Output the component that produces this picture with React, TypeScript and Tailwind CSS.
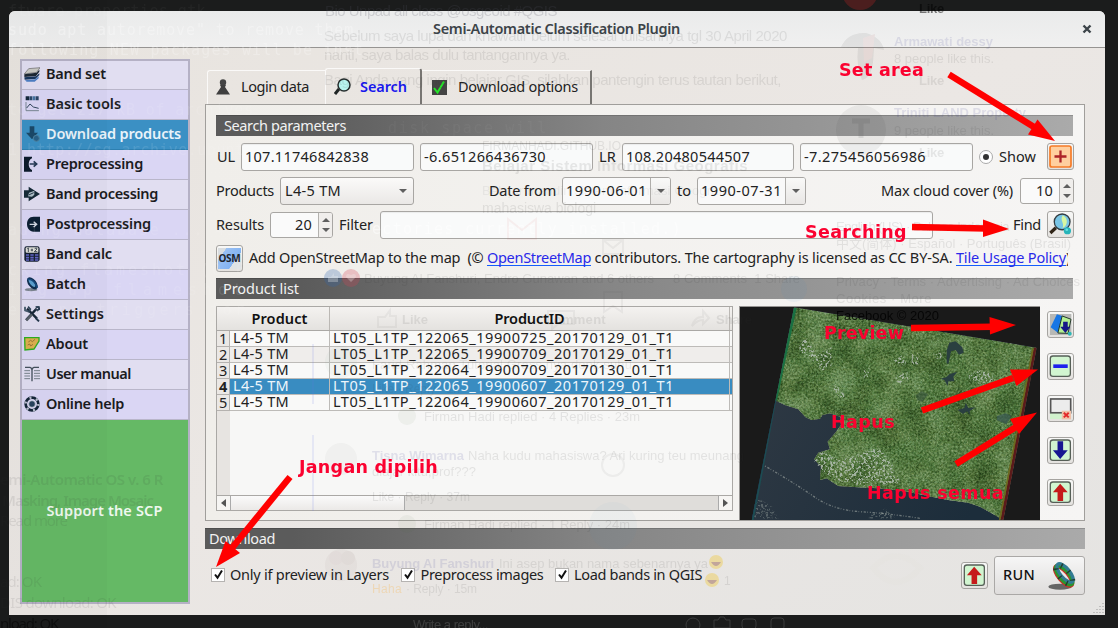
import React, { useLayoutEffect, useRef } from "react";

function Label({
  children,
  w,
  className = "",
  lift = "-mt-[2px]",
}: {
  children: string;
  w: number;
  className?: string;
  lift?: string;
}) {
  const ref = useRef<HTMLSpanElement>(null);
  useLayoutEffect(() => {
    const el = ref.current;
    if (!el) return;
    el.style.letterSpacing = "0px";
    const natural = el.getBoundingClientRect().width;
    el.style.letterSpacing = `${(w - natural) / children.length}px`;
  }, [children, w]);
  return (
    <span ref={ref} className={`inline-block shrink-0 whitespace-pre ${lift} ${className}`}>
      {children}
    </span>
  );
}

const menu: { name: string; w: number; icon: React.ReactNode }[] = [
  {
    name: "Band set",
    w: 60,
    icon: (
      <>
        <path d="M14 5L48 2L38 16L1 21Z" fill="#c9c9c4" stroke="#666" strokeWidth="2" />
        <path d="M1 22L38 17L46 8V14L36 27L1 30Z" fill="#1c2833" />
        <path d="M1 31L36 28L46 19V24L34 36L2 38Z" fill="#17365d" />
        <path d="M3 40L34 37L44 28V34L32 44H8Z" fill="#4d7fc4" />
      </>
    ),
  },
  {
    name: "Basic tools",
    w: 75,
    icon: (
      <>
        <path d="M5 1H15V13H5Z" fill="#16283d" />
        <path d="M16 1H25V13H16Z" fill="#2c4a6b" />
        <path d="M26 1H34V13H26Z" fill="#4673a3" />
        <path d="M35 1H44V13H35Z" fill="#2a4566" />
        <path d="M6 18V44H45" fill="none" stroke="#7b8794" strokeWidth="3" />
        <path d="M8 36L18 24L28 33L44 37" fill="none" stroke="#33475e" strokeWidth="3" />
      </>
    ),
  },
  {
    name: "Download products",
    w: 135,
    icon: (
      <>
        <path d="M17 1H31V20H42L24 40L6 20H17Z" fill="#1b4969" />
        <circle cx="37" cy="37" r="9" fill="#286188" stroke="#4e829f" strokeWidth="3" />
      </>
    ),
  },
  {
    name: "Preprocessing",
    w: 97,
    icon: (
      <>
        <path d="M0 2H24V7C12 10 10 37 24 42V47H0Z" fill="#0d1b2c" />
        <path d="M17 24H36M29 16L38 24L29 32" fill="none" stroke="#263a55" strokeWidth="5" />
      </>
    ),
  },
  {
    name: "Band processing",
    w: 112,
    icon: (
      <>
        <path d="M0 13H14V2L48 24L14 46V35H0Z" fill="#172b39" />
        <path d="M15 20L31 14V26L24 32L12 31Z" fill="#aebfc7" />
        <path d="M14 27L29 20" stroke="#263949" strokeWidth="3" />
      </>
    ),
  },
  {
    name: "Postprocessing",
    w: 105,
    icon: (
      <>
        <path d="M48 2H29C15 2 9 12 9 24S16 47 29 47H48Z" fill="#0d2033" />
        <path d="M17 25H36M29 17L38 25L29 33" fill="none" stroke="#d4d9e3" strokeWidth="4" />
      </>
    ),
  },
  {
    name: "Band calc",
    w: 66,
    icon: (
      <>
        <rect x="1" y="1" width="46" height="46" rx="7" fill="#162132" />
        <rect x="5" y="4" width="38" height="16" rx="3" fill="#dedfd8" />
        <path d="M10 8L13 6V18M20 12H27M24 8V16M32 8Q39 3 39 9L31 17H40" fill="none" stroke="#263341" strokeWidth="2.5" />
        <path d="M6 27H15M19 27H29M33 27H43M6 35H15M19 35H29M33 35H43M6 42H15M19 42H29M33 42H43" stroke="#6367c7" strokeWidth="5" />
      </>
    ),
  },
  {
    name: "Batch",
    w: 40,
    icon: (
      <>
        <ellipse cx="21" cy="41" rx="19" ry="5" fill="#7c8490" />
        <ellipse cx="25" cy="22" rx="12" ry="21" transform="rotate(-38 25 22)" fill="#102f50" />
        <ellipse cx="24" cy="21" rx="6" ry="14" transform="rotate(-38 24 21)" fill="#5ba0cf" />
        <path d="M11 10Q30 8 40 35" stroke="#174a7e" strokeWidth="5" fill="none" />
      </>
    ),
  },
  {
    name: "Settings",
    w: 58,
    icon: (
      <>
        <path d="M9 8L39 38M38 8L6 42" stroke="#172638" strokeWidth="7" />
        <path d="M3 2V13L14 17L19 9L12 2" fill="none" stroke="#31475a" strokeWidth="5" />
        <path d="M24 25L7 43" stroke="#59616a" strokeWidth="8" />
        <path d="M35 4L44 2L46 9L38 14M35 36L45 46" fill="none" stroke="#25394e" strokeWidth="6" />
      </>
    ),
  },
  {
    name: "About",
    w: 42,
    icon: (
      <>
        <path d="M2 5H45V15L30 39L3 42Z" fill="#ddb04f" stroke="#2eae20" strokeWidth="4" />
        <path d="M13 18L20 13L25 17L33 10M11 27L17 24L20 30L27 25" fill="none" stroke="#9a7638" strokeWidth="3" />
      </>
    ),
  },
  {
    name: "User manual",
    w: 85,
    icon: (
      <>
        <path d="M3 4H18Q24 5 24 13V46M45 4H30Q24 5 24 13" fill="none" stroke="#46525e" strokeWidth="4" />
        <path d="M1 14H18M1 22H18M1 30H18M1 38H18M30 14H48M30 22H48M30 30H48M30 38H48" stroke="#76818b" strokeWidth="3" />
      </>
    ),
  },
  {
    name: "Online help",
    w: 78,
    icon: (
      <>
        <circle cx="24" cy="24" r="19" fill="none" stroke="#142538" strokeWidth="8" />
        <circle cx="24" cy="24" r="19" fill="none" stroke="#b7bdcd" strokeWidth="7" strokeDasharray="6 13.9" />
        <circle cx="24" cy="24" r="10" fill="#28435d" stroke="#d6dbe1" strokeWidth="2" />
      </>
    ),
  },
];

const field =
  "flex h-7 shrink-0 items-center rounded-[3px] border border-[#a8a6a3] bg-[#f9fafa] pl-[3px] text-[#222] shadow-[inset_0_1px_1px_rgba(0,0,0,0.06)]";
const toolButton =
  "flex h-[27px] w-[27px] shrink-0 items-center justify-center rounded-[3px] border border-[#a5a3a0] bg-gradient-to-b from-[#f8f8f7] to-[#e4e2df]";
const sectionBar =
  "flex h-[21px] shrink-0 items-center border-t border-t-black/15 bg-gradient-to-r from-[#5b5b5b] from-10% via-[#858585] via-45% to-[#aaaaaa] text-[#f2f2f2]";

function Triangle({ up = false }: { up?: boolean }) {
  return (
    <svg className="h-1 w-2 shrink-0" viewBox="0 0 8 4">
      <path d={up ? "M0 4L4 0L8 4Z" : "M0 0H8L4 4Z"} fill="#5f5f5f" />
    </svg>
  );
}

function Spin({ value, className }: { value: string; className: string }) {
  return (
    <div className={`flex h-[26px] shrink-0 overflow-hidden rounded-[3px] border border-[#a8a6a3] bg-[#fafafa] ${className}`}>
      <div className="flex flex-1 items-center justify-end pr-[6px]">
        <Label w={17}>{value}</Label>
      </div>
      <div className="flex w-[14px] flex-col items-center justify-between border-l border-[#b3b1ae] bg-[#f0eeec] py-[5px]">
        <Triangle up />
        <Triangle />
      </div>
    </div>
  );
}

function DateBox({ value }: { value: string }) {
  return (
    <div className="flex h-7 w-[109px] shrink-0 overflow-hidden rounded-[3px] border border-[#a8a6a3] bg-[#f9f9f9]">
      <div className="flex flex-1 items-center pl-[3px]">
        <Label w={81}>{value}</Label>
      </div>
      <div className="flex w-[20px] items-center justify-center border-l border-[#b0aeab] bg-gradient-to-b from-[#f9f9f8] to-[#e9e7e5]">
        <Triangle />
      </div>
    </div>
  );
}

function Boxed({ children }: { children: React.ReactNode }) {
  return (
    <svg className="h-[23px] w-[23px]" viewBox="0 0 70 70">
      <rect x="4" y="3" width="61" height="62" rx="8" fill="#d1f5d0" stroke="#565f57" strokeWidth="4" />
      {children}
    </svg>
  );
}

const upArrow = <path d="M34 8L57 34H43V61H26V34H12Z" fill="#c51b1b" />;
const downArrow = <path d="M26 7H43V34H57L34 61L12 34H26Z" fill="#171791" />;

function Check({ text, w }: { text: string; w: number }) {
  return (
    <div className="flex items-center gap-[5px]">
      <span className="-mt-px flex h-[14px] w-[14px] items-center justify-center border border-[#b5b3b1] bg-white">
        <svg className="h-[11px] w-[11px]" viewBox="0 0 11 11">
          <path d="M2 5.5L4.5 8.7L9 1.5" fill="none" stroke="#111" strokeWidth="2" />
        </svg>
      </span>
      <Label w={w} lift="-mt-[3px]">{text}</Label>
    </div>
  );
}

function Satellite() {
  return (
    <svg className="block h-[213px] w-[300px] bg-[#1a1a1a]" viewBox="15 21 900 639" preserveAspectRatio="none">
      <defs>
        <filter id="grain" x="0" y="0" width="100%" height="100%" colorInterpolationFilters="sRGB">
          <feTurbulence type="fractalNoise" baseFrequency="0.16" numOctaves="3" seed="8" result="n" />
          <feColorMatrix
            in="n"
            type="matrix"
            values="1.0 0.15 0 0 -0.09  1.0 0 0 0 0  1.0 0 0.15 0 -0.09  0 0 0 0 1"
            result="c"
          />
          <feComposite in="c" in2="SourceGraphic" operator="in" result="d" />
          <feBlend in="d" in2="SourceGraphic" mode="soft-light" result="e" />
          <feTurbulence type="fractalNoise" baseFrequency="0.014" numOctaves="4" seed="4" result="m" />
          <feColorMatrix in="m" type="matrix" values="0.6 0.1 0 0 0.15  0.6 0 0 0 0.2  0.6 0 0 0 0.2  0 0 0 0 1" result="p" />
          <feComposite in="p" in2="SourceGraphic" operator="in" result="q" />
          <feBlend in="q" in2="e" mode="soft-light" />
        </filter>
        <filter id="clouds" x="0" y="0" width="100%" height="100%" colorInterpolationFilters="sRGB">
          <feTurbulence type="fractalNoise" baseFrequency="0.14" numOctaves="2" seed="21" />
          <feColorMatrix type="matrix" values="0 0 0 0 0.7  0 0 0 0 0.74  0 0 0 0 0.7  9 0 0 0 -4.7" result="m" />
          <feComposite in="m" in2="SourceGraphic" operator="in" />
        </filter>
        <linearGradient id="sea" x1="0" y1="0" x2="1" y2="0.4">
          <stop offset="0" stopColor="#323b45" />
          <stop offset="1" stopColor="#1c2d3b" />
        </linearGradient>
        <clipPath id="scene">
          <path d="M177 22L905 143L805 660H50Z" />
        </clipPath>
      </defs>
      <g clipPath="url(#scene)">
        <rect x="15" y="21" width="900" height="639" fill="url(#sea)" />
        <path
          d="M177 22L905 143L805 660L770 640L735 620L700 608L640 600L590 590L540 580L500 572L430 565L370 562L310 558L275 535L255 540L258 500L238 478L250 458L285 448L278 425L300 400L318 375L316 350L285 340L262 345L255 356L230 360L212 352L190 328L150 315L118 300Z"
          fill="#557840"
          filter="url(#grain)"
        />
        <g fill="#2a3f40">
          <path d="M643 128L662 124L682 142L686 158L672 164L662 150L648 154L640 192L635 190V152Z" />
          <path d="M617 236L634 232L644 222L667 215L655 230L658 244L640 244L638 258L628 240Z" />
          <path d="M668 330L688 324L692 308L700 324L722 322L704 333L706 345L696 334L684 342Z" />
          <path d="M785 348L812 340L830 347L814 373L786 361Z" fill="#365651" opacity=".7" />
          <path d="M542 286L560 273L580 282L562 306L548 301Z" fill="#36513c" opacity=".6" />
        </g>
        <g filter="url(#clouds)" fill="#fff" opacity=".85">
          <path d="M190 128L215 115L245 165L290 140L288 200L262 214L240 185L196 160Z" />
          <path d="M475 178L505 166L514 190L492 198ZM476 236L516 214L524 234L494 252Z" />
          <path d="M700 225L725 210L772 215L774 243L735 252L705 240Z" />
          <path d="M236 480L262 450L320 480L430 440L470 490L500 550L385 558L300 540L260 512Z" />
          <path d="M298 250L330 285L325 300L295 273ZM596 163L618 157L622 175L604 177Z" />
          <path d="M383 213L405 204L400 232L388 234ZM530 160H550V194H530Z" />
          <path d="M60 590L110 620L130 655L55 655ZM400 648L450 625L480 655H400Z" opacity=".4" />
        </g>
        <path
          d="M90 498Q180 550 237 590T375 635T555 655"
          fill="none"
          stroke="#aab0ac"
          strokeWidth="4"
          strokeDasharray="3 5 7 4 2 6"
          opacity=".55"
        />
        <path d="M177 22L118 300" stroke="#197042" strokeWidth="16" />
        <path d="M118 300L50 660" stroke="#1c4d52" strokeWidth="12" />
        <path d="M174 22L48 660" stroke="#173d75" strokeWidth="4" />
        <path d="M905 143L805 660" stroke="#5c1b1b" strokeWidth="17" />
        <path d="M894 145L794 660" stroke="#6d691f" strokeWidth="5" />
      </g>
    </svg>
  );
}

const products = [
  "LT05_L1TP_122065_19900725_20170129_01_T1",
  "LT05_L1TP_122065_19900709_20170129_01_T1",
  "LT05_L1TP_122064_19900709_20170130_01_T1",
  "LT05_L1TP_122065_19900607_20170129_01_T1",
  "LT05_L1TP_122064_19900607_20170129_01_T1",
];

function Ghost({ children, at, w, className = "" }: { children: string; at: [number, number]; w: number; className?: string }) {
  return (
    <div className="absolute leading-[20px]" style={{ left: at[0], top: at[1] - 10 }}>
      <Label w={w} lift="" className={className}>
        {children}
      </Label>
    </div>
  );
}

function BackgroundWindows() {
  return (
    <div className="pointer-events-none absolute inset-0 overflow-hidden font-['Liberation_Sans'] text-[15px] text-[#333]/10">
      <div className="absolute left-0 top-0 h-full w-[107px] bg-black/2" />
      <Ghost at={[325, 11]} w={232} className="text-[#556]/20">{"Bio Unpad all class @osgeoid #QGIS"}</Ghost>
      <Ghost at={[324, 36]} w={463}>Sebelum saya lupa dan khawatir belum selesai tulisannya tgl 30 April 2020</Ghost>
      <Ghost at={[324, 55]} w={246}>nanti, saya balas dulu tantangannya ya.</Ghost>
      <Ghost at={[324, 80]} w={457}>Bagi Anda yang ingin belajar GIS, silahkan pantengin terus tautan berikut,</Ghost>
      <Ghost at={[482, 145]} w={139} className="text-[12px]">FIRMANHADI.GITHUB.IO</Ghost>
      <Ghost at={[482, 166]} w={266} className="font-bold">Belajar Sistem Informasi Geografis</Ghost>
      <Ghost at={[482, 190]} w={250} className="text-[13px] text-[#333]/6">Belajar mandiri sistem informasi Geografis</Ghost>
      <Ghost at={[482, 208]} w={114} className="text-[14px]">mahasiswa biologi</Ghost>
      <Ghost at={[894, 41]} w={99} className="text-[13px] font-bold text-[#338]/12">Armawati dessy</Ghost>
      <Ghost at={[894, 58]} w={100} className="text-[13px]">8 people like this.</Ghost>
      <Ghost at={[919, 80]} w={25} className="text-[13px] font-bold">Like</Ghost>
      <Ghost at={[919, 8]} w={25} className="text-[13px] font-bold text-black/50">Like</Ghost>
      <Ghost at={[894, 112]} w={132} className="text-[13px] font-bold text-[#338]/12">Triniti LAND Property</Ghost>
      <Ghost at={[894, 130]} w={100} className="text-[13px]">9 people like this.</Ghost>
      <Ghost at={[919, 152]} w={25} className="text-[13px] font-bold">Like</Ghost>
      <Ghost at={[836, 226]} w={180} className="text-[13px]">English (US) · Bahasa Indonesia ·</Ghost>
      <div className="font-['Liberation_Sans','Noto_Sans_CJK_SC',sans-serif]">
        <Ghost at={[836, 243]} w={235} className="text-[13px]">中文(简体) · Español · Português (Brasil)</Ghost>
      </div>
      <Ghost at={[836, 281]} w={244} className="text-[13px]">Privacy · Terms · Advertising · Ad Choices</Ghost>
      <Ghost at={[836, 298]} w={96} className="text-[13px]">Cookies · More</Ghost>
      <Ghost at={[836, 315]} w={103} className="text-[13px] text-black/80">Facebook © 2020</Ghost>
      <Ghost at={[364, 278]} w={290} className="text-[13px]">Buyung Al Fanshuri, Endro Gunawan and 6 others</Ghost>
      <Ghost at={[673, 278]} w={127} className="text-[13px]">8 Comments  1 Share</Ghost>
      <Ghost at={[402, 319]} w={26} className="text-[13px] font-bold">Like</Ghost>
      <Ghost at={[544, 319]} w={62} className="text-[13px] font-bold">Comment</Ghost>
      <Ghost at={[716, 319]} w={36} className="text-[13px] font-bold">Share</Ghost>
      <Ghost at={[372, 364]} w={260} className="text-[13px] text-[#333]/8">Farid Rahman Tutorial Grass nya donk suhu</Ghost>
      <Ghost at={[372, 388]} w={88} className="text-[12px] text-[#333]/8">Like · Reply · 1h</Ghost>
      <Ghost at={[424, 416]} w={216} className="text-[13px]">Firman Hadi replied · 4 Replies · 23m</Ghost>
      <Ghost at={[372, 455]} w={92} className="text-[13px] font-bold text-[#338]/12">Tisna Wimarna</Ghost>
      <Ghost at={[468, 455]} w={276} className="text-[13px]">Naha kudu mahasiswa? Ari kuring teu meunang</Ghost>
      <Ghost at={[372, 471]} w={104} className="text-[13px]">diajar kitu,prof???</Ghost>
      <Ghost at={[372, 496]} w={98} className="text-[12px]">Like · Reply · 37m</Ghost>
      <Ghost at={[424, 524]} w={206} className="text-[13px]">Firman Hadi replied · 1 Reply · 24m</Ghost>
      <Ghost at={[372, 563]} w={122} className="text-[13px] font-bold text-[#338]/12">Buyung Al Fanshuri</Ghost>
      <Ghost at={[499, 563]} w={209} className="text-[13px]">Ini asep bukan nama sebenarnya ya</Ghost>
      <Ghost at={[372, 588]} w={30} className="text-[12px] text-amber-500/20">Haha</Ghost>
      <Ghost at={[406, 588]} w={71} className="text-[12px]">· Reply · 15m</Ghost>
      <Ghost at={[724, 580]} w={6} className="text-[12px]">1</Ghost>
      <Ghost at={[413, 624]} w={75} className="text-[13px] text-white/15">Write a reply...</Ghost>
      <div className="font-['Noto_Sans']">
        <Ghost at={[0, 479]} w={163} className="font-semibold">emi-Automatic OS v. 6 R</Ghost>
        <Ghost at={[2, 500]} w={151} className="font-semibold">Masking, Image Mosaic</Ghost>
        <Ghost at={[0, 520]} w={67}>Read more</Ghost>
        <Ghost at={[0, 581]} w={41}>ad: OK</Ghost>
        <Ghost at={[0, 602]} w={116}>DIS download: OK</Ghost>
        <Ghost at={[0, 623]} w={58} className="text-black/50">nload: OK</Ghost>
      </div>
      <div className="font-['DejaVu_Sans_Mono'] text-white/10">
        <Ghost at={[8, 11]} w={198} className="text-white/4">ftware-properties-gtk</Ghost>
        <Ghost at={[8, 30]} w={356} className="text-white/30">sudo apt autoremove" to remove them.</Ghost>
        <Ghost at={[8, 50]} w={356} className="text-white/25">following NEW packages will be inst</Ghost>
        <Ghost at={[8, 110]} w={246}>to get 217 kB of archives</Ghost>
        <Ghost at={[8, 150]} w={246}>1 http://sg.archive.ubuntu</Ghost>
        <Ghost at={[8, 230]} w={240}>ading database ... 492</Ghost>
        <Ghost at={[8, 270]} w={240}>cking flameshot (0.6</Ghost>
        <Ghost at={[8, 290]} w={240}>ing up flameshot</Ghost>
        <Ghost at={[8, 310]} w={240}>essing triggers for</Ghost>
        <Ghost at={[372, 229]} w={310} className="text-white/50">ectories currently installed.)</Ghost>
        <Ghost at={[388, 128]} w={160} className="text-white/4">disk space will</Ghost>
      </div>
      <svg className="absolute inset-0 h-full w-full" viewBox="0 0 1118 628">
        <circle cx="860" cy="-8" r="18" fill="#bc2525" opacity=".3" />
        <g opacity=".08" fill="#333">
          <path d="M841 47Q848 32 866 33Q882 38 884 50L874 48L873 62Q871 78 862 80Q856 66 858 48Z" />
          <path d="M863 38L875 34L872 58L864 62Z" fill="#a33" />
        </g>
        <circle cx="861" cy="130" r="25" fill="#222" opacity=".06" />
        <path d="M852 121H870M861 121V138" stroke="#333" strokeWidth="5" opacity=".1" />
        <circle cx="333" cy="278" r="9" fill="#3269b0" opacity=".28" />
        <circle cx="351" cy="278" r="9" fill="#d34455" opacity=".28" />
        <path d="M351 282L346 277Q346 272 351 275Q356 272 356 277ZM328 277H331L334 273V276H338V282H328Z" fill="#eee" opacity=".3" />
        <circle cx="613" cy="526" r="24" fill="#4b91cc" opacity=".04" />
        <circle cx="794" cy="289" r="13" fill="#3182c4" opacity=".06" />
        <g fill="none" stroke="#444" strokeWidth="2" opacity=".06">
          <path d="M378 317H385L390 310V316H396V327H378ZM548 311H574V324H558L552 329V324H548ZM692 326Q695 316 703 317V311L709 318L703 324V320Q697 320 692 326ZM604 292H622V312L613 306L604 312Z" />
          <path d="M508 219V239H536V219L522 230Z" stroke="#cf3d3d" />
          <path d="M603 240H623V254H603ZM603 240L613 248L623 240" />
          <circle cx="613" cy="465" r="11" />
          <path d="M873 568Q896 544 920 568Q896 596 873 568Z" stroke="#ded8c7" strokeWidth="6" />
        </g>
        <path d="M313 344V404M313 435V511" stroke="#6670e0" strokeWidth="2" opacity=".12" />
        <g opacity=".06">
          <circle cx="341" cy="362" r="16" fill="#89a49b" />
          <circle cx="341" cy="459" r="16" fill="#858b86" />
          <circle cx="341" cy="565" r="16" fill="#8b7777" />
          <circle cx="407" cy="416" r="9" fill="#56724e" />
          <circle cx="407" cy="524" r="9" fill="#56724e" />
          <circle cx="336" cy="558" r="7" fill="#634" />
          <circle cx="348" cy="558" r="7" fill="#422" />
        </g>
        <g opacity=".4">
          <circle cx="716" cy="562" r="7" fill="#f0c93d" />
          <circle cx="712" cy="580" r="7" fill="#f0c93d" />
          <path d="M711 562Q716 570 721 562ZM707 580Q712 588 717 580Z" fill="#8a4830" />
        </g>
        <g fill="none" stroke="#777" opacity=".35">
          <circle cx="693" cy="625" r="7" />
          <path d="M714 620H718L720 617H724L726 620H730V628H714Z" />
          <rect x="742" y="619" width="14" height="10" rx="3" />
          <rect x="771" y="618" width="13" height="12" rx="3" />
        </g>
      </svg>
    </div>
  );
}

function Annotations() {
  const note = "absolute font-['DejaVu_Sans'] text-[17.5px] leading-[20px] font-bold text-[#fb0230]";
  return (
    <div className="pointer-events-none absolute inset-0">
      <svg className="absolute inset-0 h-full w-full" viewBox="0 0 1118 628">
        <g stroke="#f00" strokeWidth="6.5">
          <path d="M949 74.5L1034 127" />
          <path d="M912 227L986 228.5" />
          <path d="M911 328L992 326.8" />
          <path d="M922 410.5L1013 378" />
          <path d="M956 464L1016 427" />
          <path d="M290 477L232 548" />
        </g>
        <g fill="#f00">
          <path d="M1055 141L1028 134.5L1037.5 119.5Z" />
          <path d="M1009 229L983 237L983 219.5Z" />
          <path d="M1016 325L990 334.5L989.5 317Z" />
          <path d="M1038 369.5L1016.500 386L1010 369.500Z" />
          <path d="M1037 412.500L1019 434L1010 419Z" />
          <path d="M216 567L225.500 541L240 553Z" />
        </g>
      </svg>
      <div className={`${note} left-[839px] top-[60px]`}><Label lift="" w={85}>Set area</Label></div>
      <div className={`${note} left-[805px] top-[222px]`}><Label lift="" w={102}>Searching</Label></div>
      <div className={`${note} left-[824px] top-[323px]`}><Label lift="" w={80}>Preview</Label></div>
      <div className={`${note} left-[831px] top-[412px]`}><Label lift="" w={64}>Hapus</Label></div>
      <div className={`${note} left-[867px] top-[483px]`}><Label lift="" w={137}>Hapus semua</Label></div>
      <div className={`${note} left-[299px] top-[457px]`}><Label lift="" w={139}>Jangan dipilih</Label></div>
    </div>
  );
}

export default function App() {
  return (
    <div className="relative h-[628px] w-[1118px] overflow-hidden bg-[#1b1c1c] pl-[9px] pt-[11px] font-['Noto_Sans',sans-serif] text-[14.5px] leading-[20px] text-[#222]">
      <div className="flex h-[604px] w-[1096px] flex-col overflow-hidden rounded-t-[6px] bg-gradient-to-br from-[#e8e4df] via-[#ebe7e4] to-[#e5e4e2]">
        <header className="flex h-[37px] shrink-0 items-center border-b border-[#969492] bg-gradient-to-b from-[#eaebeb] to-[#f0f0f0]">
          <div className="w-[424px] shrink-0" />
          <Label w={247} className="font-semibold text-[#3c4449]">Semi-Automatic Classification Plugin</Label>
          <svg className="ml-[402px] h-[10px] w-[10px]" viewBox="0 0 10 10">
            <path d="M1.500 1.500L8.500 8.500M8.500 1.500L1.500 8.500" stroke="#3c4449" strokeWidth="2.4" />
          </svg>
        </header>

        <div className="flex min-h-0 flex-1">
          <nav className="ml-[11px] mt-[11px] flex h-[545px] w-[170px] shrink-0 flex-col border-2 border-[#b5b1c5]">
            {menu.map((m, i) => (
              <div
                key={m.name}
                className={`flex w-full shrink-0 items-center border-b pl-[2px] font-semibold ${i === 0 ? "h-[29px]" : "h-[30px]"} ${
                  i === 2
                    ? "border-[#2d7fb0] bg-[#3b90c4] text-[#e9f3fa]"
                    : i % 2 === 0
                      ? "border-[#b9b6ca] bg-[#e1def1] text-[#1b1b21]"
                      : "border-[#b9b6ca] bg-[#dad6f4] text-[#1b1b21]"
                }`}
              >
                <svg className="-mt-px mr-[6px] h-4 w-4 shrink-0" viewBox="0 0 48 48">{m.icon}</svg>
                <Label w={m.w} lift={i === 0 ? "-mt-[4px]" : "-mt-[3px]"}>{m.name}</Label>
              </div>
            ))}
            <div className="flex flex-1 items-center justify-center bg-[#65b965] pr-px font-semibold text-[#eff8ef]">
              <Label w={116}>Support the SCP</Label>
            </div>
          </nav>

          <main className="ml-[15px] w-[880px] shrink-0">
            <div className="flex h-[56px] items-end pl-[2px]">
              <div className="flex h-[34px] w-[118px] items-center rounded-tl-[3px] border-l border-t border-[#faf9f8] pb-px pl-[7px]">
                <svg className="mr-[10px] h-4 w-4 shrink-0" viewBox="0 0 16 16">
                  <circle cx="8" cy="3.500" r="3.200" fill="#444" />
                  <path d="M5 6H11L10 8L15 15.500H1L6 8Z" fill="#3f3f3f" />
                </svg>
                <Label w={68}>Login data</Label>
              </div>
              <div className="flex h-[36px] w-[97px] items-center rounded-t-[3px] border-l border-r-2 border-t border-l-[#faf9f8] border-r-[#777572] border-t-[#faf9f8] pl-[8px]">
                <svg className="mr-[9px] h-[17px] w-[17px] shrink-0" viewBox="0 0 17 17">
                  <path d="M1 16L5 11" stroke="#202525" strokeWidth="3" />
                  <circle cx="10" cy="7" r="6" fill="#b8f4ef" stroke="#252d2d" strokeWidth="1.500" />
                </svg>
                <Label w={47} className="font-semibold text-[#1717ed]">Search</Label>
              </div>
              <div className="flex h-[34px] w-[170px] items-center border-r-2 border-t border-r-[#777572] border-t-[#faf9f8] pb-px pl-[10px]">
                <svg className="mr-[11px] h-[15px] w-[15px] shrink-0" viewBox="0 0 15 15">
                  <rect width="15" height="15" fill="#444" />
                  <path d="M2 8L5.500 12.500L12 1.500" fill="none" stroke="#25e529" strokeWidth="2" />
                </svg>
                <Label w={120}>Download options</Label>
              </div>
            </div>

            <section className="h-[417px] w-[880px] border border-[#a09e9b] bg-gradient-to-r from-[#f0eeea] to-[#f6f5f4] pl-[10px] pt-[10px]">
              <div className={`${sectionBar} w-[857px] pl-[8px]`}><Label w={122}>Search parameters</Label></div>

              <div className="mt-[7px] flex h-7 items-center pl-px">
                <Label w={18} className="mr-[6px]">UL</Label>
                <div className={`${field} mr-[6px] w-[173px]`}><Label w={124}>107.11746842838</Label></div>
                <div className={`${field} mr-[6px] w-[173px]`}><Label w={122}>-6.651266436730</Label></div>
                <Label w={17} className="mr-[6px]">LR</Label>
                <div className={`${field} mr-[6px] w-[172px]`}><Label w={124}>108.20480544507</Label></div>
                <div className={`${field} mr-[6px] w-[173px]`}><Label w={122}>-7.275456056986</Label></div>
                <div className="mr-[6px] flex h-[14px] w-[14px] items-center justify-center rounded-full border border-[#aaa] bg-white">
                  <div className="h-[6px] w-[6px] rounded-full bg-[#333]" />
                </div>
                <Label w={37} className="mr-[11px]">Show</Label>
                <div className={`${toolButton} -mt-px`}>
                  <svg className="h-[23px] w-[23px]" viewBox="0 0 23 23">
                    <rect x="1" y="1" width="21" height="21" rx="2" fill="#ffcf9f" stroke="#f67b27" strokeWidth="1.700" />
                    <path d="M5.500 11.500H17.500M11.500 5.500V17.500" stroke="#ad2429" strokeWidth="2.300" />
                  </svg>
                </div>
              </div>

              <div className="mt-[6px] flex h-7 items-center">
                <Label w={58} className="mr-[6px]">Products</Label>
                <div className="mr-[75px] flex h-7 w-[134px] shrink-0 items-center justify-between rounded-[3px] border border-[#a8a6a3] bg-gradient-to-b from-[#fbfaf9] to-[#eae8e6] pl-[4px] pr-[6px]">
                  <Label w={56}>L4-5 TM</Label><Triangle />
                </div>
                <Label w={67} className="mr-[6px]">Date from</Label>
                <DateBox value="1990-06-01" />
                <Label w={14} className="mx-[6px]">to</Label>
                <DateBox value="1990-07-31" />
                <Label w={132} className="ml-[75px] mr-[7px]">Max cloud cover (%)</Label>
                <Spin value="10" className="w-[54px]" />
              </div>

              <div className="mt-[6px] flex h-7 items-center">
                <Label w={48} className="mr-[6px]">Results</Label>
                <Spin value="20" className="w-[63px]" />
                <Label w={34} className="ml-[6px] mr-[7px]">Filter</Label>
                <div className={`${field} mr-[80px] w-[553px]`} />
                <Label w={28} className="mr-[6px]">Find</Label>
                <div className={`${toolButton} -mt-px`}>
                  <svg className="h-[23px] w-[23px]" viewBox="0 0 70 70">
                    <path d="M4 61L21 45" stroke="#302517" strokeWidth="10" />
                    <circle cx="40" cy="27" r="24" fill="#79c5e5" stroke="#333d42" strokeWidth="4" />
                    <path d="M42 7C62 17 55 42 41 46C49 31 31 22 42 7Z" fill="#d7f7a1" />
                    <circle cx="56" cy="54" r="11" fill="#26b4b9" />
                    <circle cx="54" cy="51" r="4" fill="#68e1e2" />
                  </svg>
                </div>
              </div>

              <div className="mt-[5px] flex h-[28px] items-center">
                <div className={`${toolButton} mr-[6px]`}>
                  <div className="flex h-[21px] w-[23px] items-center justify-center bg-[linear-gradient(125deg,#d9dde0_22%,#9ac0f2_23%,#83b3f2_68%,#dfe3e5_69%)] text-[10px] font-bold text-[#20252d]">
                    <Label w={22} lift="">OSM</Label>
                  </div>
                </div>
                <Label w={238}>{"Add OpenStreetMap to the map  (© "}</Label>
                <Label w={104} lift="-mt-[3px]" className="h-[19px] border-b border-blue-600 text-[#2929e9]">OpenStreetMap</Label>
                <Label w={365}>{" contributors. The cartography is licensed as CC BY-SA. "}</Label>
                <Label w={110} lift="-mt-[3px]" className="h-[19px] border-b border-blue-600 text-[#2929e9]">Tile Usage Policy</Label>
                <span className="-mt-[2px] w-[2px] overflow-hidden">)</span>
              </div>

              <div className={`${sectionBar} mt-[6px] w-[857px] pl-[7px]`}><Label w={76}>Product list</Label></div>

              <div className="mt-[7px] flex">
                <div className="mr-[6px] flex h-[205px] w-[517px] shrink-0 flex-col border border-[#aaa8a5] bg-[#f7f7f6]">
                  <div className="flex h-[24px] shrink-0 items-center border-b border-[#aaa8a5] bg-gradient-to-b from-[#f4f2f0] to-[#e4e2df] font-semibold text-[#111]">
                    <div className="flex h-full w-[113px] items-center justify-center border-r border-[#bbb8b4] pl-[13px]"><Label w={56}>Product</Label></div>
                    <div className="flex h-full w-[400px] items-center justify-center border-r border-[#bbb8b4]"><Label w={70}>ProductID</Label></div>
                  </div>
                  {products.map((id, i) => (
                    <div key={id} className={`flex h-4 shrink-0 ${i === 3 ? "bg-[#398cc1] text-[#edf6fc]" : i % 2 ? "bg-[#efedeb]" : "bg-[#f9f9f8]"}`}>
                      <div className={`flex w-[13px] items-center border-b border-r border-[#b5b2af] bg-[#ebe8e5] pb-px pl-[2px] text-[#222] ${i === 3 ? "font-bold" : ""}`}>{i + 1}</div>
                      <div className="flex w-[100px] items-center border-b border-r border-[#bdbbb8] pb-[2px] pl-[3px]"><Label w={56}>L4-5 TM</Label></div>
                      <div className="flex w-[400px] items-center border-b border-r border-[#bdbbb8] pb-[2px] pl-[3px]"><Label w={341}>{id}</Label></div>
                      <div className="flex-1 border-b border-[#bdbbb8]" />
                    </div>
                  ))}
                  <div className="w-[13px] flex-1 bg-[#e7e4e1]" />
                  <div className="flex h-[15px] shrink-0 border-t border-[#aaa8a5] bg-[#dfddda]">
                    <div className="flex w-[14px] items-center justify-center border-r border-[#aaa] bg-[#f6f5f3]">
                      <svg className="h-[8px] w-[5px]" viewBox="0 0 5 8"><path d="M5 0V8L0 4Z" fill="#555" /></svg>
                    </div>
                    <div className="w-[174px] border-r border-[#aaa] bg-gradient-to-b from-[#fafafa] to-[#ebe9e7]" />
                    <div className="flex-1" />
                    <div className="flex w-[14px] items-center justify-center border-l border-[#aaa] bg-[#f6f5f3]">
                      <svg className="h-[8px] w-[5px]" viewBox="0 0 5 8"><path d="M0 0V8L5 4Z" fill="#555" /></svg>
                    </div>
                  </div>
                </div>
                <div className="h-[214px] w-[301px] shrink-0 overflow-hidden border-l border-t border-[#969492]"><Satellite /></div>
                <div className="ml-[7px] mt-[5px] flex flex-col gap-[15px]">
                  <div className={toolButton}>
                    <svg className="h-[23px] w-[23px]" viewBox="0 0 70 70">
                      <rect x="3" y="3" width="65" height="64" fill="#b7b8b5" />
                      <path d="M24 4L43 10L28 61L5 43Z" fill="#1776e4" />
                      <path d="M40 9L67 19L58 62L27 61Z" fill="#b3ef92" stroke="#23352a" strokeWidth="3" />
                      <path d="M43 27H57V42H65L50 61L34 42H43Z" fill="#171788" />
                      <circle cx="63" cy="63" r="6" fill="#2bb8b8" />
                    </svg>
                  </div>
                  <div className={toolButton}><Boxed><path d="M13 34H57" stroke="#1e22ee" strokeWidth="11" /></Boxed></div>
                  <div className={toolButton}>
                    <svg className="h-[23px] w-[23px]" viewBox="0 0 70 70">
                      <rect x="3" y="42" width="64" height="25" fill="#d1f2cd" />
                      <rect x="5" y="6" width="61" height="42" fill="#ececec" stroke="#555" strokeWidth="5" />
                      <rect x="39" y="42" width="28" height="26" fill="#efc1a8" />
                      <path d="M45 48L60 62M60 48L45 62" stroke="#e32929" strokeWidth="6" />
                    </svg>
                  </div>
                  <div className={toolButton}><Boxed>{downArrow}</Boxed></div>
                  <div className={toolButton}><Boxed>{upArrow}</Boxed></div>
                </div>
              </div>
            </section>

            <div className={`${sectionBar} mt-[7px] w-[880px] pl-[4px]`}><Label w={66}>Download</Label></div>
            <div className="mt-[6px] flex h-[40px] items-center pl-[6px]">
              <div className="flex w-[191px]"><Check text="Only if preview in Layers" w={159} /></div>
              <div className="flex w-[154px]"><Check text="Preprocess images" w={123} /></div>
              <div className="flex w-[405px]"><Check text="Load bands in QGIS" w={128} /></div>
              <div className={`${toolButton} ml-[2px]`}><Boxed>{upArrow}</Boxed></div>
              <div className="ml-[6px] flex h-[39px] w-[91px] shrink-0 items-center rounded-[3px] border border-[#aaa8a6] bg-gradient-to-b from-[#f6f6f6] to-[#dfdddc] pl-[8px]">
                <Label w={32} className="font-medium text-[#111]">RUN</Label>
                <svg className="ml-[13px] h-[29px] w-[30px]" viewBox="0 0 90 87">
                  <ellipse cx="36" cy="77" rx="35" ry="9" fill="#666" />
                  <g fill="none" transform="rotate(-40 48 40)">
                    <ellipse cx="44" cy="43" rx="14" ry="36" stroke="#c83228" strokeWidth="13" />
                    <ellipse cx="47" cy="42" rx="14" ry="35" stroke="#29962f" strokeWidth="12" />
                    <ellipse cx="53" cy="39" rx="14" ry="34" stroke="#327b92" strokeWidth="10" />
                    <ellipse cx="48" cy="41" rx="15" ry="35" stroke="#203c30" strokeWidth="16" strokeDasharray="4 23" />
                  </g>
                </svg>
              </div>
            </div>
          </main>
        </div>
      </div>
      <BackgroundWindows />
      <svg className="pointer-events-none absolute left-[1092px] top-[602px] h-[12px] w-[12px]" viewBox="0 0 12 12">
        <path d="M11 1V12M8 4V12M5 7V12M2 10V12" stroke="#999" strokeWidth="1" strokeDasharray="1 2" />
      </svg>
      <Annotations />
    </div>
  );
}
